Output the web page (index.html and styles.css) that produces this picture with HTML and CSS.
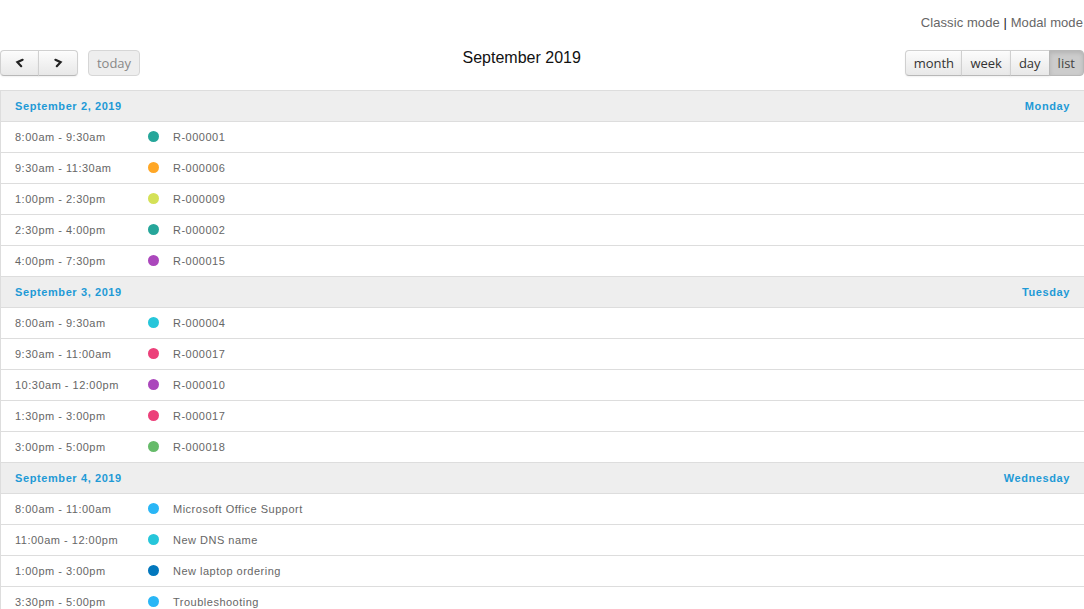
FILE: index.html
```html
<!DOCTYPE html>
<html>
<head>
<meta charset="utf-8">
<link rel="stylesheet" href="styles.css">
</head>
<body>
<div class="modes"><a class="mode">Classic mode</a> <span class="sep">|</span> <a class="mode">Modal mode</a></div>
<div class="toolbar">
  <div class="left">
    <div class="group">
      <button class="btn first" aria-label="prev"><svg width="10" height="10" viewBox="0 0 10 10"><path d="M7.6 1.8 L2.4 4.2 L6.2 8.2" fill="none" stroke="#222" stroke-width="2.2" stroke-linecap="round" stroke-linejoin="miter"/></svg></button>
      <button class="btn last" aria-label="next"><svg width="10" height="10" viewBox="0 0 10 10"><path d="M2.4 1.8 L7.6 4.2 L3.8 8.2" fill="none" stroke="#222" stroke-width="2.2" stroke-linecap="round" stroke-linejoin="miter"/></svg></button>
    </div>
    <button class="btn solo disabled">today</button>
  </div>
  <h2 class="title">September 2019</h2>
  <div class="group right">
    <button class="btn first">month</button>
    <button class="btn mid">week</button>
    <button class="btn mid">day</button>
    <button class="btn last active">list</button>
  </div>
</div>
<div class="list">
  <div class="day"><span>September 2, 2019</span><span>Monday</span></div>
  <div class="ev"><span class="time">8:00am - 9:30am</span><span class="dot" style="background:#26a69a"></span><span class="name">R-000001</span></div>
  <div class="ev"><span class="time">9:30am - 11:30am</span><span class="dot" style="background:#ffa726"></span><span class="name">R-000006</span></div>
  <div class="ev"><span class="time">1:00pm - 2:30pm</span><span class="dot" style="background:#d4e157"></span><span class="name">R-000009</span></div>
  <div class="ev"><span class="time">2:30pm - 4:00pm</span><span class="dot" style="background:#26a69a"></span><span class="name">R-000002</span></div>
  <div class="ev"><span class="time">4:00pm - 7:30pm</span><span class="dot" style="background:#ab47bc"></span><span class="name">R-000015</span></div>
  <div class="day"><span>September 3, 2019</span><span>Tuesday</span></div>
  <div class="ev"><span class="time">8:00am - 9:30am</span><span class="dot" style="background:#26c6da"></span><span class="name">R-000004</span></div>
  <div class="ev"><span class="time">9:30am - 11:00am</span><span class="dot" style="background:#ec407a"></span><span class="name">R-000017</span></div>
  <div class="ev"><span class="time">10:30am - 12:00pm</span><span class="dot" style="background:#ab47bc"></span><span class="name">R-000010</span></div>
  <div class="ev"><span class="time">1:30pm - 3:00pm</span><span class="dot" style="background:#ec407a"></span><span class="name">R-000017</span></div>
  <div class="ev"><span class="time">3:00pm - 5:00pm</span><span class="dot" style="background:#66bb6a"></span><span class="name">R-000018</span></div>
  <div class="day"><span>September 4, 2019</span><span>Wednesday</span></div>
  <div class="ev"><span class="time">8:00am - 11:00am</span><span class="dot" style="background:#29b6f6"></span><span class="name">Microsoft Office Support</span></div>
  <div class="ev"><span class="time">11:00am - 12:00pm</span><span class="dot" style="background:#26c6da"></span><span class="name">New DNS name</span></div>
  <div class="ev"><span class="time">1:00pm - 3:00pm</span><span class="dot" style="background:#0277bd"></span><span class="name">New laptop ordering</span></div>
  <div class="ev"><span class="time">3:30pm - 5:00pm</span><span class="dot" style="background:#29b6f6"></span><span class="name">Troubleshooting</span></div>
</div>
</body>
</html>
```
FILE: styles.css
```css
html, body {
  margin: 0;
  padding: 0;
  background: #fff;
  font-family: "Liberation Sans", Arial, sans-serif;
}
.modes {
  height: 50px;
  box-sizing: border-box;
  padding-top: 15px;
  text-align: right;
  font-size: 13px;
  line-height: 16px;
  color: #666;
  padding-right: 1px;
  letter-spacing: 0.08px;
}
.sep { color: #222; }
.toolbar {
  display: flex;
  align-items: center;
  height: 26px;
  margin-bottom: 14px;
}
.left {
  display: flex;
  gap: 10px;
}
.group { display: flex; }
.title {
  flex: 1;
  margin: 0;
  text-align: center;
  font-size: 16px;
  font-weight: normal;
  color: #111;
  line-height: 18px;
  position: relative;
  top: -5px;
  left: -1px;
}
.btn {
  height: 26px;
  box-sizing: border-box;
  margin: 0;
  padding: 0 8px;
  border: 1px solid #d0d0d0;
  border-bottom-color: #b8b8b8;
  background: linear-gradient(#fcfcfc, #e8e8e8);
  box-shadow: inset 0 1px 0 rgba(255,255,255,.3), 0 1px 2px rgba(0,0,0,.06);
  font-family: "Open Sans", sans-serif;
  font-size: 13px;
  color: #333;
  display: flex;
  align-items: center;
  justify-content: center;
}
.group .btn + .btn { margin-left: -1px; }
.first { border-radius: 4px 0 0 4px; }
.last { border-radius: 0 4px 4px 0; }
.mid { border-radius: 0; }
.solo { border-radius: 4px; }
.left .group .btn { width: 39px; padding: 0; }
.left .group .btn.last { width: 40px; }
.disabled {
  width: 52px;
  background: #eee;
  border-color: #d6d6d6;
  color: #888;
  box-shadow: none;
}
.active {
  background: #ccc;
  border-color: #b8b8b8;
  box-shadow: inset 0 2px 4px rgba(0,0,0,.12);
  color: #444;
  padding: 0 8px 0 9px;
}
.right .btn { padding: 0 8px; }
.right .btn.first { padding: 0 8px; width: 57px; }
.list {
  border-top: 1px solid #ddd;
  border-left: 1px solid #ddd;
}
.day {
  height: 30px;
  display: flex;
  align-items: center;
  justify-content: space-between;
  padding: 0 14px;
  background: #eee;
  border-bottom: 1px solid #ddd;
  color: #1e9ad6;
  font-weight: bold;
  font-size: 11px;
  letter-spacing: 0.6px;
}
.ev {
  height: 30px;
  display: flex;
  align-items: center;
  border-bottom: 1px solid #ddd;
  font-size: 11px;
  color: #666;
  letter-spacing: 0.5px;
}
.time {
  width: 133px;
  padding-left: 14px;
}
.dot {
  width: 11px;
  height: 11px;
  border-radius: 50%;
  margin-right: 14px;
  position: relative;
  top: -1px;
}
```
